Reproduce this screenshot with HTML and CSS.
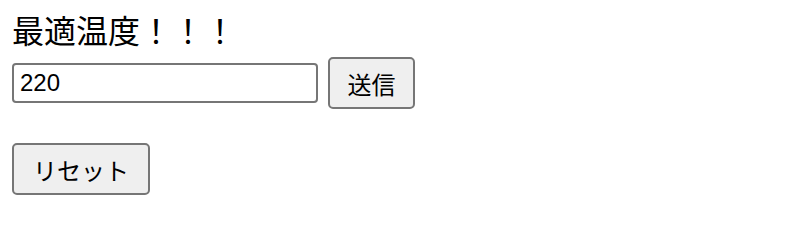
FILE: index.html
```html
<!DOCTYPE html>
<html lang="ja">
<head>
    <meta charset="UTF-8">
    <meta name="viewport" content="width=device-width, initial-scale=1.0">
    <title>最適温度</title>
    <link rel="stylesheet" href="styles.css">
</head>
<body>
    <div class="title">最適温度！！！</div>

    <form class="temp-form" onsubmit="return false;">
        <input type="text" class="temp-input" value="220">
        <button type="submit" class="btn">送信</button>
    </form>

    <button type="button" class="btn btn-reset">リセット</button>
</body>
</html>
```

FILE: styles.css
```css
* {
    margin: 0;
    padding: 0;
    box-sizing: border-box;
}

body {
    font-family: 'Liberation Sans', 'Noto Sans CJK JP', sans-serif;
    font-size: 24px;
    color: #000;
    background: #fff;
    padding: 12px;
}

.title {
    font-size: 32px;
    line-height: 40px;
}

.temp-form {
    display: flex;
    align-items: center;
    gap: 10px;
    margin-top: 5px;
}

.temp-input {
    width: 306px;
    height: 40px;
    padding: 0 6px;
    border: 2px solid #767676;
    border-radius: 4px;
    font-family: inherit;
    font-size: 24px;
    color: #000;
}

.btn {
    height: 52px;
    padding: 0 17.5px;
    background: #efefef;
    border: 2px solid #767676;
    border-radius: 5px;
    font-family: inherit;
    font-size: 24px;
    color: #000;
}

.btn-reset {
    margin-top: 34px;
    padding: 0 19px;
}
```
